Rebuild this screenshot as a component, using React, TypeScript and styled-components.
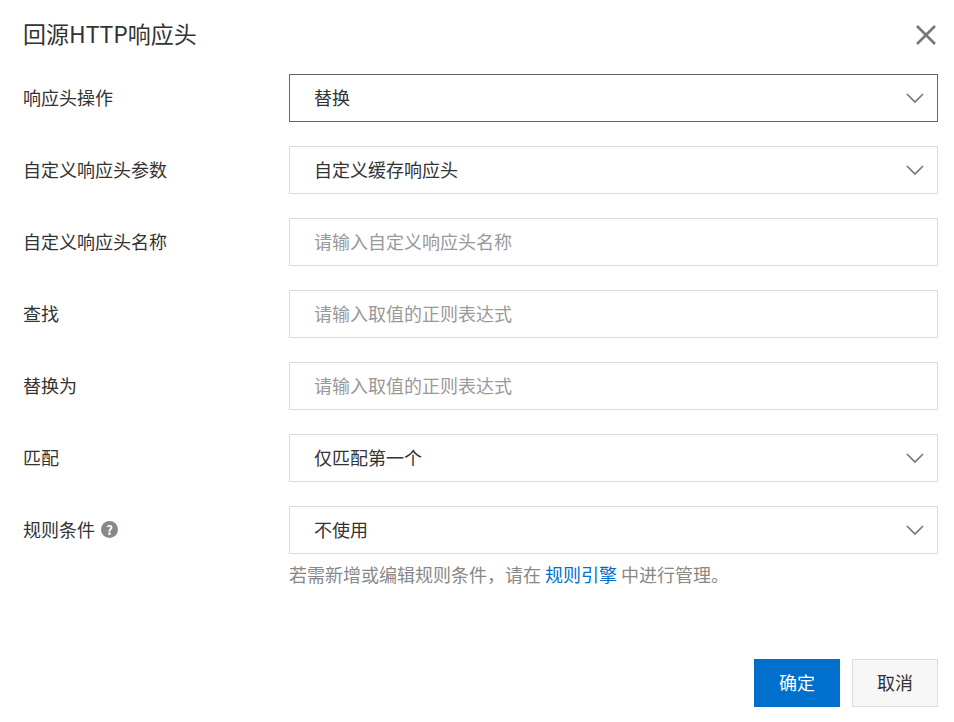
import styled, { createGlobalStyle } from "styled-components";

const GlobalStyle = createGlobalStyle`
  html, body {
    margin: 0;
    padding: 0;
    background: #fff;
  }
  body {
    font-family: "Noto Sans CJK SC", "Noto Sans", sans-serif;
    color: #333;
  }
`;

const Dialog = styled.div`
  width: 954px;
  height: 722px;
  box-sizing: border-box;
  padding: 0 16px 0 23px;
  display: flex;
  flex-direction: column;
`;

const Header = styled.header`
  height: 74px;
  display: flex;
  align-items: center;
  justify-content: space-between;
  padding-bottom: 8px;
  box-sizing: border-box;
`;

const Title = styled.h1`
  margin: 0;
  font-size: 23px;
  font-weight: 400;
  color: #333;
`;

const CloseButton = styled.button`
  border: 0;
  background: none;
  padding: 0;
  width: 22px;
  height: 22px;
  margin-right: 1px;
  margin-top: 4px;
  display: flex;
  align-items: center;
  justify-content: center;
  cursor: pointer;
`;

const Form = styled.div`
  display: flex;
  flex-direction: column;
  gap: 24px;
`;

const Row = styled.div`
  display: grid;
  grid-template-columns: 266px 1fr;
  align-items: start;
`;

const Label = styled.label`
  height: 48px;
  display: flex;
  align-items: center;
  gap: 6px;
  font-size: 18px;
  color: #333;
  padding-bottom: 2px;
  box-sizing: border-box;
`;

const Help = styled.span`
  width: 17px;
  height: 17px;
  border-radius: 50%;
  background: #888;
  color: #fff;
  font-size: 13px;
  font-weight: 700;
  display: inline-flex;
  align-items: center;
  justify-content: center;
  line-height: 1;
`;

const Field = styled.div<{ $active?: boolean }>`
  height: 48px;
  box-sizing: border-box;
  border: 1px solid ${(p) => (p.$active ? "#666" : "#dcdcdc")};
  background: #fff;
  display: flex;
  align-items: center;
  justify-content: space-between;
  padding: 0 12px 0 24px;
  font-size: 18px;
`;

const Value = styled.span<{ $placeholder?: boolean }>`
  color: ${(p) => (p.$placeholder ? "#999" : "#333")};
  margin-bottom: 2px;
`;

const Hint = styled.div`
  margin-top: 7px;
  font-size: 18px;
  line-height: 26px;
  color: #888;

  a {
    color: #0070cc;
    text-decoration: none;
  }
`;

const Footer = styled.footer`
  margin-top: auto;
  margin-bottom: 15px;
  display: flex;
  justify-content: flex-end;
  gap: 12px;
`;

const Button = styled.button<{ $primary?: boolean }>`
  width: 86px;
  height: 48px;
  box-sizing: border-box;
  border: 1px solid ${(p) => (p.$primary ? "#0070cc" : "#dcdcdc")};
  background: ${(p) => (p.$primary ? "#0070cc" : "#f7f7f7")};
  color: ${(p) => (p.$primary ? "#fff" : "#333")};
  font-family: inherit;
  font-size: 18px;
  padding: 0 0 2px;
  cursor: pointer;
`;

const Chevron = () => (
  <svg width="20" height="12" viewBox="0 0 20 12" fill="none">
    <path d="M2 2 L10 10 L18 2" stroke="#777" strokeWidth="1.7" />
  </svg>
);

const CloseIcon = () => (
  <svg width="22" height="22" viewBox="0 0 22 22" fill="none">
    <path d="M2 2 L20 20 M20 2 L2 20" stroke="#777" strokeWidth="2.6" />
  </svg>
);

interface IField {
  label: string;
  value: string;
  placeholder?: boolean;
  select?: boolean;
  active?: boolean;
  help?: boolean;
}

const fields: IField[] = [
  { label: "响应头操作", value: "替换", select: true, active: true },
  { label: "自定义响应头参数", value: "自定义缓存响应头", select: true },
  { label: "自定义响应头名称", value: "请输入自定义响应头名称", placeholder: true },
  { label: "查找", value: "请输入取值的正则表达式", placeholder: true },
  { label: "替换为", value: "请输入取值的正则表达式", placeholder: true },
  { label: "匹配", value: "仅匹配第一个", select: true },
  { label: "规则条件", value: "不使用", select: true, help: true },
];

const App = () => {
  return (
    <>
      <GlobalStyle />
      <Dialog>
        <Header>
          <Title>回源HTTP响应头</Title>
          <CloseButton aria-label="关闭">
            <CloseIcon />
          </CloseButton>
        </Header>
        <Form>
          {fields.map((item) => (
            <Row key={item.label}>
              <Label>
                {item.label}
                {item.help && <Help>?</Help>}
              </Label>
              <div>
                <Field $active={item.active}>
                  <Value $placeholder={item.placeholder}>{item.value}</Value>
                  {item.select && <Chevron />}
                </Field>
                {item.help && (
                  <Hint>
                    若需新增或编辑规则条件，请在 <a href="#">规则引擎</a> 中进行管理。
                  </Hint>
                )}
              </div>
            </Row>
          ))}
        </Form>
        <Footer>
          <Button $primary>确定</Button>
          <Button>取消</Button>
        </Footer>
      </Dialog>
    </>
  );
};

export default App;
